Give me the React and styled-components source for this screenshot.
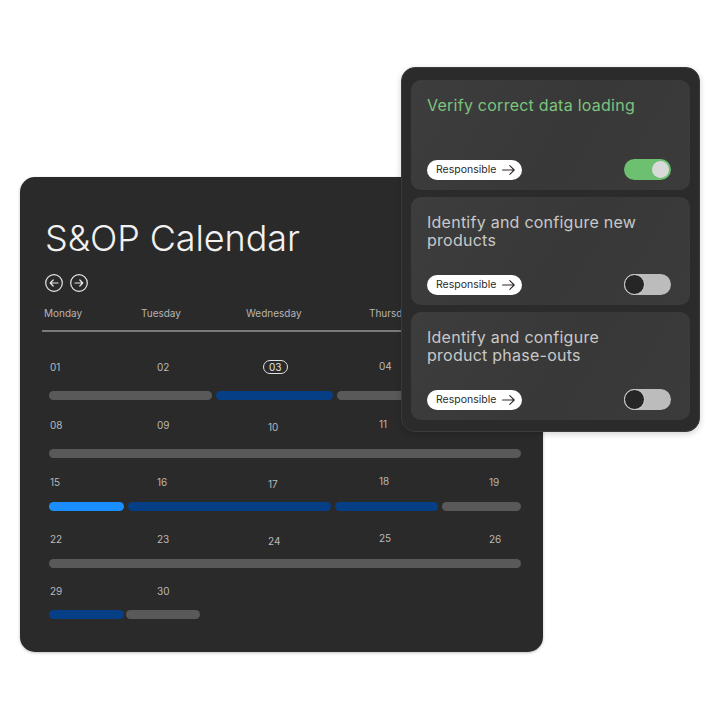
import React from 'react';
import styled, { createGlobalStyle } from 'styled-components';

const GlobalStyle = createGlobalStyle`
  html, body {
    margin: 0;
    padding: 0;
    background: #ffffff;
  }
  body {
    font-family: 'Inter', 'Noto Sans', sans-serif;
    -webkit-font-smoothing: antialiased;
  }
`;

const Stage = styled.div`
  position: relative;
  width: 720px;
  height: 720px;
  box-sizing: border-box;
  padding: 177px 0 0 20px;
  background: #ffffff;
  overflow: hidden;
`;

/* ---------- calendar ---------- */

const CalendarCard = styled.section`
  width: 523px;
  height: 475px;
  box-sizing: border-box;
  padding: 41px 22px 0 24px;
  border-radius: 15px;
  background: #2a2a2a;
  box-shadow: 0 1px 3px rgba(0, 0, 0, 0.25);
  display: flex;
  flex-direction: column;
`;

const Title = styled.h1`
  margin: 0 0 0 1px;
  font-family: 'Inter', sans-serif;
  font-size: 36px;
  line-height: 40px;
  font-weight: 300;
  letter-spacing: -0.1px;
  color: #f1f1f1;
`;

const NavRow = styled.div`
  display: flex;
  gap: 7px;
  margin: 16px 0 0 1px;
`;

const NavButton = styled.button`
  width: 18px;
  height: 18px;
  padding: 0;
  border: 0;
  background: none;
  color: #e8e8e8;
  display: flex;
  align-items: center;
  justify-content: center;
  cursor: pointer;
`;

const DayHeader = styled.div`
  display: grid;
  grid-template-columns: 97px 105px 123px 1fr;
  margin-top: 15px;
  font-family: 'Inter', sans-serif;
  font-size: 10px;
  line-height: 12px;
  color: #b4b4b4;
`;

const Divider = styled.div`
  height: 1.5px;
  margin: 11px 0 0 -2px;
  background: #7a7a7a;
`;

const Weeks = styled.div`
  display: flex;
  flex-direction: column;
  margin-top: 28px;
  padding-left: 5px;
`;

/* each week: a row of dates, then the bars that run across it */
const Week = styled.div`
  display: flex;
  flex-direction: column;
  gap: ${({ $lead }) => $lead}px;
  margin-top: ${({ $space }) => $space}px;
`;

const NumberRow = styled.div`
  display: grid;
  grid-template-columns: 107px 111px 111px 110px 1fr;
  height: 14px;
  align-items: center;
  padding-left: 1px;
`;

const DayNumber = styled.span`
  font-family: 'Inter', sans-serif;
  font-size: 10px;
  line-height: 14px;
  color: #b9b9b9;

  &:nth-child(3) {
    transform: translateY(1.5px);
  }
  &:nth-child(4) {
    transform: translateY(-1.5px);
  }
`;

const TodayNumber = styled.span`
  justify-self: start;
  margin-left: -5px;
  padding: 0 5px;
  height: 14px;
  border: 1px solid #e0e0e0;
  border-radius: 8px;
  box-sizing: border-box;
  font-family: 'Inter', sans-serif;
  font-size: 10px;
  line-height: 12px;
  color: #e6e6e6;
`;

const BarRow = styled.div`
  display: flex;
  gap: ${({ $gap }) => $gap}px;
  height: 9px;
`;

const tones = {
  idle: '#595959',
  planned: '#063f85',
  active: '#1a8dff',
};

const Bar = styled.div`
  height: 9px;
  border-radius: 5px;
  flex: ${({ $grow }) => ($grow ? '1 1 0' : '0 0 auto')};
  background: ${({ $tone }) => tones[$tone]};
`;

const weeks = [
  {
    days: ['01', '02', '03', '04'],
    today: '03',
    space: 0,
    lead: 17,
    gap: 4,
    bars: [
      { w: 163, tone: 'idle' },
      { w: 117, tone: 'planned' },
      { tone: 'idle' },
    ],
  },
  {
    days: ['08', '09', '10', '11'],
    space: 18,
    lead: 17,
    gap: 4,
    bars: [{ tone: 'idle' }],
  },
  {
    days: ['15', '16', '17', '18', '19'],
    space: 17,
    lead: 13,
    gap: 4,
    bars: [
      { w: 75, tone: 'active' },
      { w: 203, tone: 'planned' },
      { w: 103, tone: 'planned' },
      { tone: 'idle' },
    ],
  },
  {
    days: ['22', '23', '24', '25', '26'],
    space: 21,
    lead: 13,
    gap: 4,
    bars: [{ tone: 'idle' }],
  },
  {
    days: ['29', '30'],
    space: 16,
    lead: 12,
    gap: 2,
    bars: [
      { w: 75, tone: 'planned' },
      { w: 74, tone: 'idle' },
    ],
  },
];

const ArrowCircle = ({ dir }) => (
  <svg width="18" height="18" viewBox="0 0 18 18" fill="none" stroke="currentColor" strokeWidth="1.2" strokeLinecap="round" strokeLinejoin="round">
    <circle cx="9" cy="9" r="8.3" />
    {dir === 'left' ? (
      <path d="M13 9H5.2M8.2 6L5.2 9l3 3" />
    ) : (
      <path d="M5 9h7.8M9.8 6l3 3-3 3" />
    )}
  </svg>
);

/* ---------- task panel ---------- */

const Panel = styled.aside`
  position: absolute;
  left: 401px;
  top: 67px;
  width: 299px;
  height: 365px;
  box-sizing: border-box;
  padding: 12px 9px 10px 9px;
  border-radius: 14px;
  background: #2b2b2b;
  border: 1px solid #3b3b3b;
  box-shadow: 0 2px 6px rgba(0, 0, 0, 0.18);
  display: flex;
  flex-direction: column;
  gap: 7px;
`;

const TaskCard = styled.div`
  height: ${({ $tall }) => ($tall ? 110 : 108)}px;
  box-sizing: border-box;
  padding: 16px 19px 10px 16px;
  border-radius: 10px;
  background: linear-gradient(120deg, #3d3d3d 0%, #383838 55%, #3b3b3b 100%);
  display: flex;
  flex-direction: column;
  justify-content: space-between;
`;

const TaskTitle = styled.div`
  max-width: 232px;
  font-family: 'Inter', sans-serif;
  font-size: 16px;
  line-height: 18px;
  letter-spacing: 0.25px;
  color: ${({ $done }) => ($done ? '#7cc47e' : '#c8c8c8')};
`;

const TaskFooter = styled.div`
  display: flex;
  align-items: center;
  justify-content: space-between;
`;

const ResponsibleButton = styled.button`
  height: 20px;
  padding: 0 7px 0 9px;
  border: 0;
  border-radius: 10px;
  background: #ffffff;
  display: flex;
  align-items: center;
  gap: 6px;
  font-family: 'Inter', sans-serif;
  font-size: 10.5px;
  color: #2a2a2a;
  cursor: pointer;
`;

const Toggle = styled.div`
  position: relative;
  width: 47px;
  height: 21px;
  box-sizing: border-box;
  border-radius: 11px;
  background: ${({ $on }) => ($on ? '#6cc06f' : '#bcbcbc')};
`;

const Knob = styled.span`
  position: absolute;
  top: ${({ $on }) => ($on ? 2 : 0)}px;
  ${({ $on }) => ($on ? 'right: 2px;' : 'left: 0;')}
  width: ${({ $on }) => ($on ? 17 : 21)}px;
  height: ${({ $on }) => ($on ? 17 : 21)}px;
  box-sizing: border-box;
  border-radius: 50%;
  background: ${({ $on }) => ($on ? '#d9d9d9' : '#262626')};
  border: ${({ $on }) => ($on ? 'none' : '1.5px solid #d6d6d6')};
`;

const tasks = [
  { title: 'Verify correct data loading', done: true },
  { title: 'Identify and configure new products', done: false },
  { title: 'Identify and configure product phase-outs', done: false },
];

const LongArrow = () => (
  <svg width="13" height="10" viewBox="0 0 13 10" fill="none" stroke="#2a2a2a" strokeWidth="1.1" strokeLinecap="round" strokeLinejoin="round">
    <path d="M0.6 5h11.6M7.8 0.7L12.2 5 7.8 9.3" />
  </svg>
);

export default function App() {
  return (
    <>
      <GlobalStyle />
      <Stage>
        <CalendarCard>
          <Title>S&amp;OP Calendar</Title>
          <NavRow>
            <NavButton aria-label="Previous">
              <ArrowCircle dir="left" />
            </NavButton>
            <NavButton aria-label="Next">
              <ArrowCircle dir="right" />
            </NavButton>
          </NavRow>
          <DayHeader>
            <span>Monday</span>
            <span>Tuesday</span>
            <span>Wednesday</span>
            <span>Thursday</span>
          </DayHeader>
          <Divider />
          <Weeks>
            {weeks.map((week) => (
              <Week key={week.days[0]} $space={week.space} $lead={week.lead}>
                <NumberRow>
                  {week.days.map((d) =>
                    d === week.today ? (
                      <TodayNumber key={d}>{d}</TodayNumber>
                    ) : (
                      <DayNumber key={d}>{d}</DayNumber>
                    ),
                  )}
                </NumberRow>
                <BarRow $gap={week.gap}>
                  {week.bars.map((bar, i) => (
                    <Bar
                      key={i}
                      $tone={bar.tone}
                      $grow={!bar.w}
                      style={bar.w ? { width: `${bar.w}px` } : undefined}
                    />
                  ))}
                </BarRow>
              </Week>
            ))}
          </Weeks>
        </CalendarCard>

        <Panel>
          {tasks.map((task, i) => (
            <TaskCard key={task.title} $tall={i === 0}>
              <TaskTitle $done={task.done}>{task.title}</TaskTitle>
              <TaskFooter>
                <ResponsibleButton>
                  Responsible
                  <LongArrow />
                </ResponsibleButton>
                <Toggle $on={task.done}>
                  <Knob $on={task.done} />
                </Toggle>
              </TaskFooter>
            </TaskCard>
          ))}
        </Panel>
      </Stage>
    </>
  );
}
